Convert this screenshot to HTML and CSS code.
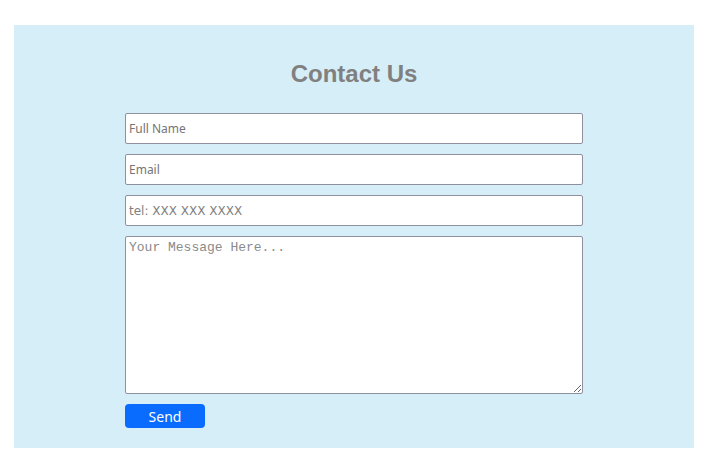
FILE: index.html
```html
<!DOCTYPE html>
<html lang="en">
<head>
<meta charset="utf-8">
<title>Contact Us</title>
<link rel="stylesheet" href="styles.css">
</head>
<body>
<section class="contact">
  <h2 class="contact-title">Contact Us</h2>
  <form class="contact-form">
    <input class="field" type="text" placeholder="Full Name">
    <input class="field" type="email" placeholder="Email">
    <input class="field tel" type="tel" placeholder="tel: XXX XXX XXXX">
    <textarea class="field message" placeholder="Your Message Here..."></textarea>
    <div class="actions"><button class="send" type="submit">Send</button></div>
  </form>
</section>
</body>
</html>
```

FILE: styles.css
```css
html, body {
  margin: 0;
  padding: 0;
  background: #ffffff;
}
body {
  padding: 25px 16px 0 14px;
}
.contact {
  background: #d6eef8;
  height: 423px;
  box-sizing: border-box;
  padding-top: 35px;
}
.contact-title {
  margin: 0;
  text-align: center;
  font-family: "Liberation Sans", Arial, sans-serif;
  font-weight: bold;
  font-size: 24px;
  line-height: 28px;
  color: #808080;
}
.contact-form {
  width: 458px;
  margin: 25px auto 0;
  display: flex;
  flex-direction: column;
  gap: 10px;
}
.field {
  box-sizing: border-box;
  width: 100%;
  height: 31px;
  margin: 0;
  padding: 1px 3px;
  border: 1px solid #8f8f9d;
  border-radius: 2px;
  background: #ffffff;
  font-family: "Noto Sans", "Open Sans", sans-serif;
  font-size: 12px;
  color: #333;
  outline: none;
}
.field::placeholder {
  color: #757575;
}
.tel {
  font-family: "DejaVu Sans", "Noto Sans", sans-serif;
}
.tel::placeholder {
  color: #808080;
}
.message {
  height: 158px;
  padding: 3px 3px;
  font-family: "Liberation Mono", "Courier New", monospace;
  font-size: 13px;
  resize: both;
}
.message::placeholder {
  color: #8a8a8a;
}
.actions {
  display: flex;
}
.send {
  width: 80px;
  height: 24px;
  border: none;
  border-radius: 4px;
  background: #0a6cff;
  color: #ffffff;
  font-family: "Noto Sans", "Open Sans", sans-serif;
  font-size: 14px;
  padding: 0;
  cursor: pointer;
}
```
